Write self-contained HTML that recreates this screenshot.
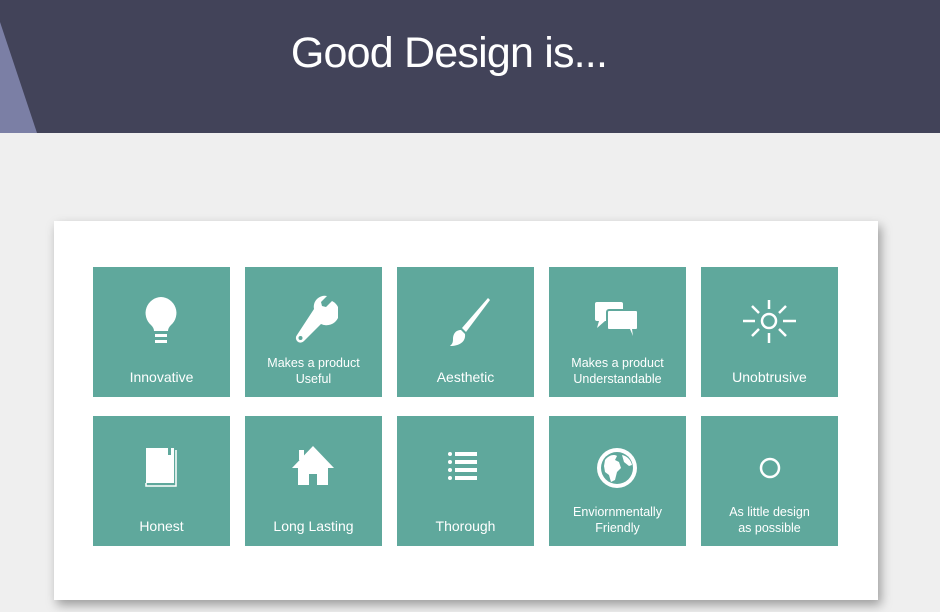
<!DOCTYPE html>
<html><head><style>
body{margin:0;width:940px;height:612px;background:#efefef;font-family:"Liberation Sans",sans-serif;overflow:hidden;position:relative}
.hdr{position:absolute;left:0;top:0;width:940px;height:133px;background:#424359}
.title{position:absolute;left:0;width:898px;text-align:center;top:29px;color:#fff;font-size:43px;font-weight:300;letter-spacing:-0.8px}
.card{position:absolute;left:54px;top:221px;width:824px;height:379px;background:#fff;box-shadow:3px 5px 10px rgba(0,0,0,.35)}
.t{position:absolute;width:137px;height:130px;background:#5fa89c;color:#fff;text-align:center}
.t svg{position:absolute;left:43px;top:26px}
.l1{position:absolute;left:0;right:0;top:102px;font-size:14px}
.l2{position:absolute;left:0;right:0;top:88px;font-size:12.5px;line-height:16px}
</style></head><body>
<div class="hdr"><svg width="60" height="133" style="position:absolute;left:0;top:0"><polygon points="0,22 37,133 0,133" fill="#7b7fa5"/></svg><div class="title">Good Design is...</div></div>
<div class="card"></div>

<div class="t" style="left:93px;top:267px"><svg width="50" height="55"><path d="M25 4a16 16 0 0 0-10 28c2 2 3 4 3 6h14c0-2 1-4 3-6a16 16 0 0 0-10-28z" fill="#fff"/><rect x="19" y="41" width="12" height="3" fill="#fff"/><rect x="19" y="47" width="12" height="3" fill="#fff"/></svg><div class="l1">Innovative</div></div>
<div class="t" style="left:245px;top:267px"><svg width="50" height="55"><path d="M44 8l-6 6-4-1-1-4 6-6a11 11 0 0 0-13 13L9 42a4.5 4.5 0 0 0 7 6l17-17a11 11 0 0 0 11-23z" fill="#fff"/><circle cx="12.5" cy="45" r="2" fill="#5fa89c"/></svg><div class="l2">Makes a product<br>Useful</div></div>
<div class="t" style="left:397px;top:267px"><svg width="50" height="55"><path d="M48 5L22 35l4 4 24-32z" fill="#fff"/><path d="M21 37c-6 0-8 5-8 9s-1 5-3 7c9 0 16-4 15-12z" fill="#fff"/></svg><div class="l1">Aesthetic</div></div>
<div class="t" style="left:549px;top:267px"><svg width="50" height="55"><rect x="3" y="9" width="28" height="19" rx="2" fill="#fff"/><path d="M7 28l-2 7 8-7z" fill="#fff"/><rect x="15" y="17" width="31" height="20" rx="2" fill="#fff" stroke="#5fa89c" stroke-width="2"/><path d="M38 36l3 7-1-7z" fill="#fff"/></svg><div class="l2">Makes a product<br>Understandable</div></div>
<div class="t" style="left:701px;top:267px"><svg width="60" height="55" style="left:40px"><g stroke="#fff" stroke-width="2.5"><circle cx="28" cy="28" r="7" fill="none"/><line x1="28" y1="7" x2="28" y2="16"/><line x1="28" y1="40" x2="28" y2="50"/><line x1="2" y1="28" x2="14" y2="28"/><line x1="42" y1="28" x2="55" y2="28"/><line x1="11" y1="13" x2="18" y2="20"/><line x1="38" y1="36" x2="45" y2="43"/><line x1="45" y1="13" x2="38" y2="20"/><line x1="18" y1="36" x2="11" y2="43"/></g></svg><div class="l1">Unobtrusive</div></div>

<div class="t" style="left:93px;top:416px"><svg width="50" height="55"><rect x="10" y="6" width="28" height="35" fill="#fff"/><path d="M10 41v3h30V8" stroke="#fff" stroke-width="1.5" fill="none"/><rect x="32" y="6" width="3" height="7" fill="#5fa89c"/></svg><div class="l1">Honest</div></div>
<div class="t" style="left:245px;top:416px"><svg width="50" height="55"><path d="M25 4L4 26h6v17h11V32h8v11h11V26h6z" fill="#fff"/><rect x="11" y="8" width="5" height="10" fill="#fff"/></svg><div class="l1">Long Lasting</div></div>
<div class="t" style="left:397px;top:416px"><svg width="50" height="55"><g fill="#fff"><circle cx="10" cy="12" r="2"/><circle cx="10" cy="20" r="2"/><circle cx="10" cy="28" r="2"/><circle cx="10" cy="36" r="2"/><rect x="15" y="10" width="22" height="4"/><rect x="15" y="18" width="22" height="4"/><rect x="15" y="26" width="22" height="4"/><rect x="15" y="34" width="22" height="4"/></g></svg><div class="l1">Thorough</div></div>
<div class="t" style="left:549px;top:416px"><svg width="50" height="55"><circle cx="25" cy="26" r="20" fill="#fff"/><circle cx="25" cy="26" r="16" fill="#5fa89c"/><path d="M13 18c4-5 9-6 12-4l-2 4 4 2 2 6-4 4-2 8-4 2-2-7-4-3-1-6z M30 13c5 1 9 5 10 10l-3 1-5-4z" fill="#fff"/></svg><div class="l2">Enviornmentally<br>Friendly</div></div>
<div class="t" style="left:701px;top:416px"><svg width="50" height="55"><circle cx="26" cy="26" r="9" fill="none" stroke="#fff" stroke-width="2.5"/></svg><div class="l2">As little design<br>as possible</div></div>
</body></html>
